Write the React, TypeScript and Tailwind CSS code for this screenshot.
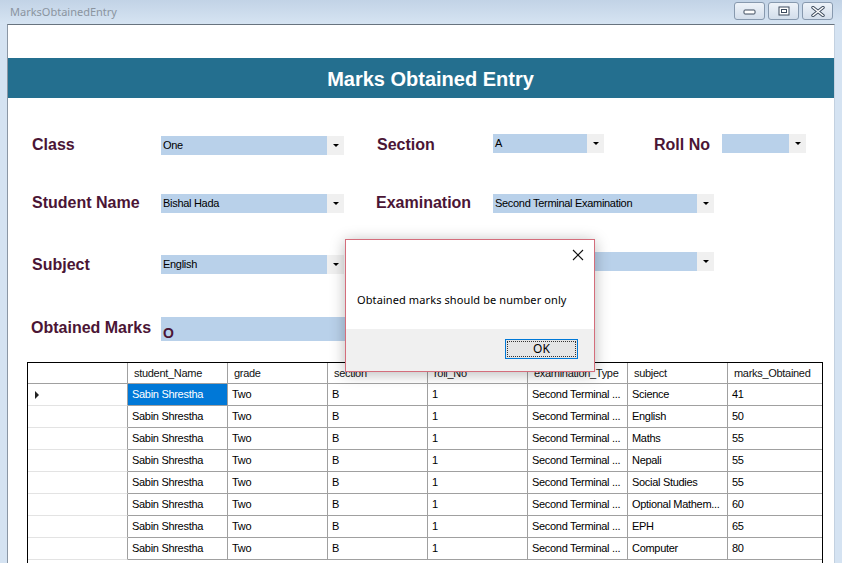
import React from 'react';

interface Mark {
    subject: string;
    marks: string;
}

const rows: Mark[] = [
    { subject: 'Science', marks: '41' },
    { subject: 'English', marks: '50' },
    { subject: 'Maths', marks: '55' },
    { subject: 'Nepali', marks: '55' },
    { subject: 'Social Studies', marks: '55' },
    { subject: 'Optional Mathem...', marks: '60' },
    { subject: 'EPH', marks: '65' },
    { subject: 'Computer', marks: '80' },
];

const headers = ['student_Name', 'grade', 'section', 'roll_No', 'examination_Type', 'subject', 'marks_Obtained'];

function Label({ text, className }: { text: string; className: string }) {
    return (
        <div className={`shrink-0 font-['Liberation_Sans',Arial,sans-serif] font-bold text-[16px] leading-[18px] text-[#4b1535] ${className}`}>
            {text}
        </div>
    );
}

function Combo({ value, width, className = '' }: { value: string; width: string; className?: string }) {
    return (
        <div className={`shrink-0 flex h-[19px] ${width} ${className}`}>
            <div className="flex-1 bg-[#b9d1ea] pl-[2px] flex items-center text-[11px] tracking-[-0.3px] text-black font-['Liberation_Sans',Arial,sans-serif]">
                {value}
            </div>
            <div className="w-[17px] bg-[#f0f0f0] flex items-center justify-center">
                <div className="w-0 h-0 border-l-[3px] border-r-[3px] border-t-[3px] border-l-transparent border-r-transparent border-t-black" />
            </div>
        </div>
    );
}

function WinButton({ children }: { children: React.ReactNode }) {
    return (
        <div className="w-[31px] h-[18px] rounded-[3px] border border-[#8799ae] bg-gradient-to-b from-[#eef3f9] to-[#d3deeb] flex items-center justify-center">
            {children}
        </div>
    );
}

export default function App() {
    return (
        <div className="relative w-[842px] h-[563px] overflow-hidden bg-[#d5e3f2] flex flex-col">
            {/* Title bar */}
            <div className="shrink-0 h-[24px] flex justify-between bg-gradient-to-b from-[#c2d3e6] to-[#d6e4f2]">
                <div className="pl-[10px] pt-[4px] text-[11px] leading-[16px] text-[#8a949f] font-['Noto_Sans',sans-serif]">
                    MarksObtainedEntry
                </div>
                <div className="flex gap-[3px] pt-[2px] pr-[9px]">
                    <WinButton>
                        <svg width="13" height="7" viewBox="0 0 13 7">
                            <rect x="1" y="2" width="11" height="4" rx="1" fill="#fff" stroke="#3c4a5c" strokeWidth="1" />
                        </svg>
                    </WinButton>
                    <WinButton>
                        <svg width="12" height="10" viewBox="0 0 12 10">
                            <rect x="1" y="1" width="10" height="8" fill="#fff" stroke="#3c4a5c" strokeWidth="1" />
                            <rect x="3.5" y="3.5" width="5" height="3" fill="none" stroke="#3c4a5c" strokeWidth="1" />
                        </svg>
                    </WinButton>
                    <WinButton>
                        <svg width="14" height="11" viewBox="0 0 14 11">
                            <path d="M2 1.5 L12 9.5 M12 1.5 L2 9.5" stroke="#3c4a5c" strokeWidth="3.4" strokeLinecap="round" />
                            <path d="M2 1.5 L12 9.5 M12 1.5 L2 9.5" stroke="#fff" strokeWidth="1.6" strokeLinecap="round" />
                        </svg>
                    </WinButton>
                </div>
            </div>

            {/* Client area */}
            <div className="flex-1 min-h-0 overflow-hidden ml-[7px] mr-[7px] bg-white border-t border-t-[#68737f] border-l border-l-[#8b97a5] border-r border-r-[#c3d1e0] flex flex-col">
                <div className="shrink-0 mt-[33px] h-[40px] bg-[#246f8f] flex items-center justify-center pl-[19px]">
                    <span className="text-white font-bold text-[20px] leading-[24px] mt-[1px] font-['Liberation_Sans',Arial,sans-serif]">Marks Obtained Entry</span>
                </div>

                {/* Row 1 */}
                <div className="shrink-0 mt-[37px] h-[20px] flex items-center pl-[24px]">
                    <Label text="Class" className="w-[129px]" />
                    <Combo value="One" width="w-[183px]" />
                    <Label text="Section" className="ml-[33px] w-[116px]" />
                    <Combo value="A" width="w-[111px]" className="mb-[4px]" />
                    <Label text="Roll No" className="ml-[50px] w-[68px]" />
                    <Combo value="" width="w-[84px]" className="mb-[4px]" />
                </div>

                {/* Row 2 */}
                <div className="shrink-0 mt-[38px] h-[20px] flex items-center pl-[24px]">
                    <Label text="Student Name" className="w-[129px]" />
                    <Combo value="Bishal Hada" width="w-[183px]" />
                    <Label text="Examination" className="ml-[32px] w-[117px]" />
                    <Combo value="Second Terminal Examination" width="w-[221px]" />
                </div>

                {/* Row 3 */}
                <div className="shrink-0 mt-[41px] h-[20px] flex items-center pl-[24px]">
                    <Label text="Subject" className="w-[129px] mt-[1px]" />
                    <Combo value="English" width="w-[183px]" />
                    <Combo value="" width="w-[221px]" className="ml-[149px] mb-[6px]" />
                </div>

                {/* Row 4 */}
                <div className="shrink-0 mt-[43px] h-[24px] flex items-center pl-[23px]">
                    <Label text="Obtained Marks" className="w-[130px] mb-[3px]" />
                    <div className="w-[260px] h-[24px] bg-[#b9d1ea] pl-[2px] pt-[6px] text-[14px] font-bold text-[#4b1535] font-['Liberation_Sans',Arial,sans-serif]">
                        O
                    </div>
                </div>

                {/* Grid */}
                <div className="shrink-0 mt-[21px] ml-[19px] w-[796px] h-[230px] border border-black bg-white font-['Liberation_Sans',Arial,sans-serif] text-[11px] tracking-[-0.3px] text-black">
                    <div className="flex h-[21px]">
                        <div className="w-[100px] border-r border-r-[#a0a0a0] border-b border-b-[#a0a0a0]" />
                        {headers.map((h, i) => (
                            <div
                                key={h}
                                className={`${i === headers.length - 1 ? 'w-[94px]' : 'w-[100px] border-r border-r-[#a0a0a0]'} border-b border-b-[#a0a0a0] pl-[6px] flex items-center text-[#111]`}
                            >
                                {h}
                            </div>
                        ))}
                    </div>
                    {rows.map((r, idx) => {
                        const cells = ['Sabin Shrestha', 'Two', 'B', '1', 'Second Terminal ...', r.subject, r.marks];
                        return (
                            <div key={idx} className="flex h-[22px]">
                                <div className="w-[100px] border-r border-r-[#a0a0a0] border-b border-b-[#e3e3e3] flex items-center pl-[7px]">
                                    {idx === 0 && (
                                        <div className="w-0 h-0 border-t-[4px] border-b-[4px] border-l-[4px] border-t-transparent border-b-transparent border-l-[#222]" />
                                    )}
                                </div>
                                {cells.map((c, i) => (
                                    <div
                                        key={i}
                                        className={`${i === cells.length - 1 ? 'w-[94px]' : 'w-[100px] border-r border-r-[#a0a0a0]'} border-b border-b-[#a0a0a0] pl-[4px] flex items-center whitespace-nowrap overflow-hidden ${idx === 0 && i === 0 ? 'bg-[#0078d7] text-white' : ''}`}
                                    >
                                        {c}
                                    </div>
                                ))}
                            </div>
                        );
                    })}
                </div>
            </div>

            {/* Message box */}
            <div className="absolute left-[345px] top-[239px] w-[250px] h-[133px] border border-[#d46d7b] bg-white flex flex-col shadow-[0_2px_14px_rgba(0,0,0,0.28)] font-['Noto_Sans',sans-serif]">
                <div className="h-[89px] flex flex-col">
                    <div className="flex justify-end pt-[9px] pr-[10px]">
                        <svg width="12" height="12" viewBox="0 0 12 12">
                            <path d="M1 1 L11 11 M11 1 L1 11" stroke="#111" strokeWidth="1.1" />
                        </svg>
                    </div>
                    <div className="pl-[11px] mt-[31px] text-[11px] tracking-[0.1px] text-black leading-[16px]">
                        Obtained marks should be number only
                    </div>
                </div>
                <div className="flex-1 bg-[#f0f0f0] flex justify-end items-start pt-[10px] pr-[16px]">
                    <div className="w-[73px] h-[20px] border border-[#0078d7] bg-[#e5e5e5] p-[1px]">
                        <div className="w-full h-full border border-dotted border-[#333] flex items-center justify-center text-[12px] text-black">
                            OK
                        </div>
                    </div>
                </div>
            </div>
        </div>
    );
}
